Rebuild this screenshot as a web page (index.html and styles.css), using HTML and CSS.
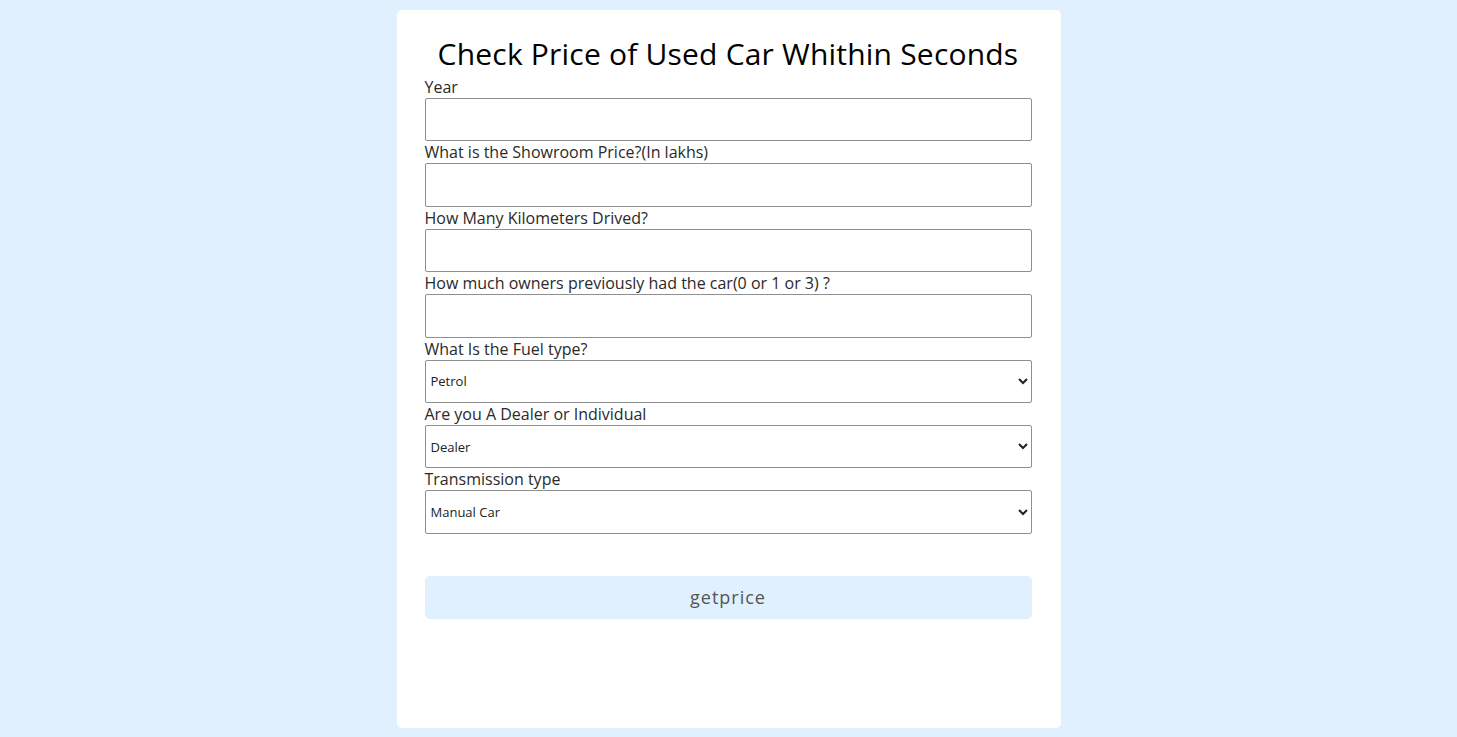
FILE: index.html
```html
<!DOCTYPE html>
<html>
<head>
<meta charset="utf-8">
<link rel="stylesheet" href="styles.css">
</head>
<body>
<div class="page">
  <div class="card">
    <h1 class="title">Check Price of Used Car Whithin Seconds</h1>
    <form class="form">
      <label class="label">Year</label>
      <input class="field" type="text">
      <label class="label">What is the Showroom Price?(In lakhs)</label>
      <input class="field" type="text">
      <label class="label">How Many Kilometers Drived?</label>
      <input class="field" type="text">
      <label class="label">How much owners previously had the car(0 or 1 or 3) ?</label>
      <input class="field" type="text">
      <label class="label">What Is the Fuel type?</label>
      <select class="field select"><option>Petrol</option><option>Diesel</option><option>CNG</option></select>
      <label class="label">Are you A Dealer or Individual</label>
      <select class="field select"><option>Dealer</option><option>Individual</option></select>
      <label class="label">Transmission type</label>
      <select class="field select"><option>Manual Car</option><option>Automatic Car</option></select>
      <button class="btn" type="button">getprice</button>
    </form>
  </div>
</div>
</body>
</html>
```
FILE: styles.css
```css
html, body {
  margin: 0;
  padding: 0;
  background: #e0f0fe;
  font-family: "Open Sans", "Noto Sans", sans-serif;
  color: #111;
}
.page {
  display: flex;
  justify-content: center;
  padding-top: 10px;
  height: 737px;
  box-sizing: border-box;
}
.card {
  width: 664px;
  height: 718px;
  box-sizing: border-box;
  background: #fff;
  border-radius: 5px;
  padding: 26px 29px 0 28px;
}
.title {
  margin: 0 0 5px;
  font-size: 30px;
  font-weight: 400;
  line-height: 35px;
  height: 35px;
  text-align: center;
  color: #000;
  letter-spacing: 0.2px;
}
.form {
  display: flex;
  flex-direction: column;
}
.label {
  font-size: 16px;
  line-height: 22px;
  height: 22px;
  color: #2a2a2a;
}
.field {
  height: 43.4px;
  box-sizing: border-box;
  border: 1px solid #8f8f8f;
  border-radius: 2px;
  background: #fff;
  font-family: "Open Sans", "Noto Sans", sans-serif;
  font-size: 13px;
  padding: 0 1px;
  color: #222;
  margin: 0;
}
.select {
  appearance: auto;
}
.btn {
  margin-top: 42px;
  height: 43px;
  border: none;
  border-radius: 5px;
  background: #e0f0fe;
  color: #555;
  font-family: "Open Sans", "Noto Sans", sans-serif;
  font-size: 18px;
  letter-spacing: 1px;
}
```
